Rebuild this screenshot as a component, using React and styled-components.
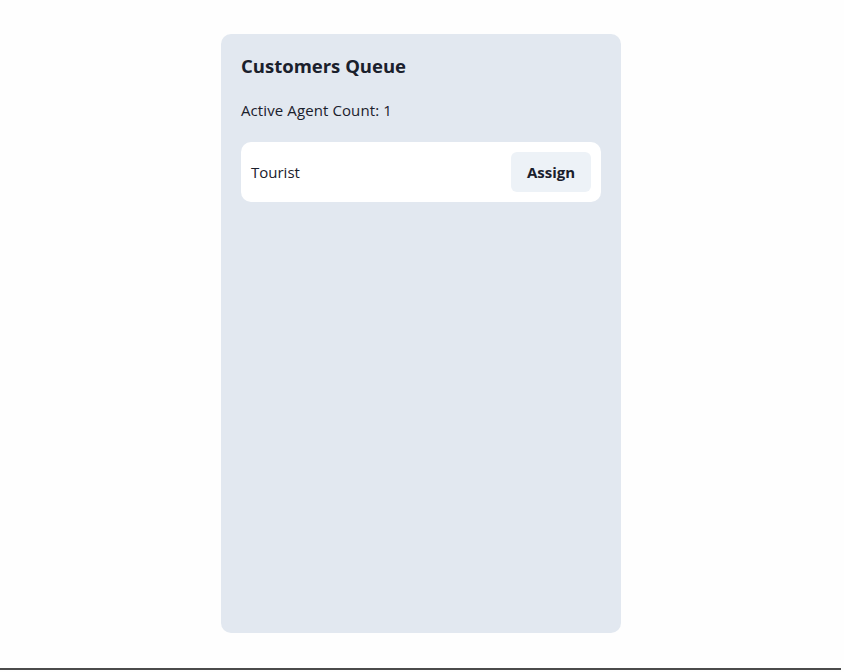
import React from "react";
import styled, { createGlobalStyle } from "styled-components";

const Global = createGlobalStyle`
  html, body { margin: 0; padding: 0; background: #fefefe; }
  body { font-family: "Open Sans", "Noto Sans", "Liberation Sans", sans-serif; color: #1a202c; }
  * { box-sizing: border-box; }
`;

const Page = styled.div`
  display: flex;
  flex-direction: column;
  height: 672px;
  overflow: hidden;
`;

const Main = styled.main`
  flex: 1;
  display: flex;
  justify-content: center;
  align-items: flex-start;
  padding: 34px 2px 0 0;
`;

const Card = styled.section`
  width: 400px;
  height: 599px;
  background: #e2e8f0;
  border-radius: 10px;
  padding: 20px;
  display: flex;
  flex-direction: column;
`;

const Title = styled.h2`
  margin: 0;
  font-size: 18.5px;
  font-weight: 700;
  line-height: 24px;
  color: #1a202c;
`;

const Count = styled.p`
  margin: 20px 0 0;
  font-size: 15px;
  line-height: 24px;
  letter-spacing: 0.1px;
  color: #1a202c;
`;

const List = styled.ul`
  list-style: none;
  margin: 20px 0 0;
  padding: 0;
  display: flex;
  flex-direction: column;
  gap: 10px;
`;

const Row = styled.li`
  display: flex;
  align-items: center;
  justify-content: space-between;
  height: 60px;
  padding: 10px;
  background: #ffffff;
  border-radius: 10px;
`;

const Name = styled.span`
  font-size: 15px;
  color: #1a202c;
`;

const Button = styled.button`
  width: 80px;
  height: 40px;
  border: none;
  border-radius: 6px;
  background: #edf2f7;
  color: #1a202c;
  font-family: inherit;
  font-size: 15px;
  font-weight: 700;
  cursor: pointer;
`;

const Rule = styled.div`
  height: 2px;
  margin: 0 3px 2px 0;
  background: #4b4b4b;
`;

export default function App() {
  const customers = ["Tourist"];
  return (
    <Page>
      <Global />
      <Main>
        <Card>
          <Title>Customers Queue</Title>
          <Count>Active Agent Count: 1</Count>
          <List>
            {customers.map((c) => (
              <Row key={c}>
                <Name>{c}</Name>
                <Button>Assign</Button>
              </Row>
            ))}
          </List>
        </Card>
      </Main>
      <Rule />
    </Page>
  );
}
